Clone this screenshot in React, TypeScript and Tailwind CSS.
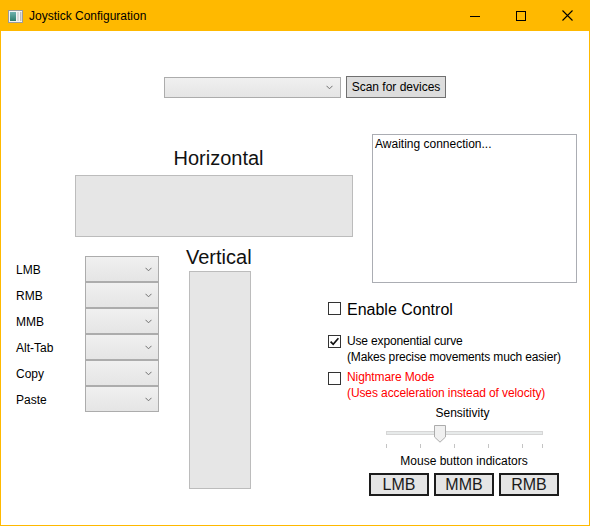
import React from "react";

function Chevron() {
  return (
    <svg width="7" height="5" viewBox="0 0 7 5" className="block">
      <path d="M0.5 0.8 L3.5 3.8 L6.5 0.8" fill="none" stroke="#707070" strokeWidth="1" />
    </svg>
  );
}

function Combo({ className }: { className: string }) {
  return (
    <div
      className={
        "border border-[#ACACAC] bg-gradient-to-b from-[#F0F0F0] to-[#E5E5E5] flex items-center justify-end " +
        className
      }
    >
      <Chevron />
    </div>
  );
}

function CheckBox({ checked, className }: { checked?: boolean; className?: string }) {
  return (
    <div className={"w-[13px] h-[13px] shrink-0 border border-[#333333] bg-white relative " + (className ?? "")}>
      {checked && (
        <svg width="11" height="11" viewBox="0 0 11 11" className="absolute left-0 top-0">
          <path d="M1.6 5.6 L4.2 8.3 L9.4 2.2" fill="none" stroke="#111" strokeWidth="1.7" />
        </svg>
      )}
    </div>
  );
}

function AppIcon() {
  return (
    <svg width="15" height="13" viewBox="0 0 15 13" className="block">
      <defs>
        <linearGradient id="tl" x1="0" y1="0" x2="0" y2="1">
          <stop offset="0" stopColor="#6FB2B0" />
          <stop offset="1" stopColor="#2E7D6C" />
        </linearGradient>
      </defs>
      <rect x="0.5" y="0.5" width="14" height="12" fill="#F4F4F4" stroke="#9B9B9B" />
      <rect x="2" y="2" width="6" height="9" fill="url(#tl)" />
      <rect x="9" y="2" width="2" height="9" fill="#D9D9D9" />
      <rect x="12" y="2" width="1.5" height="9" fill="#BDBDBD" />
    </svg>
  );
}

function IndicatorButton({ label }: { label: string }) {
  return (
    <div className="w-[60px] h-[23px] border-2 border-[#1c1c1c] bg-[#E5E5E5] flex items-center justify-center text-[16px] leading-[20px] text-[#1a1a1a]">
      {label}
    </div>
  );
}

export default function App() {
  const labels = ["LMB", "RMB", "MMB", "Alt-Tab", "Copy", "Paste"];
  const ticks = [0, 34, 68, 102, 136, 156];
  return (
    <div className="w-[590px] h-[526px] bg-[#FFB900] flex flex-col font-['Liberation_Sans',Arial,sans-serif] text-black">
      {/* Title bar */}
      <div className="h-[31px] flex items-center shrink-0">
        <div className="ml-[8px] mt-[1px]">
          <AppIcon />
        </div>
        <div className="ml-[6px] text-[12px] leading-[16px] text-black">Joystick Configuration</div>
        <div className="ml-auto flex h-full">
          <div className="w-[46px] h-full flex items-center justify-center">
            <svg width="10" height="10" viewBox="0 0 10 10">
              <path d="M0 5.5 H10" stroke="#000" strokeWidth="1" />
            </svg>
          </div>
          <div className="w-[46px] h-full flex items-center justify-center">
            <svg width="10" height="10" viewBox="0 0 10 10">
              <rect x="0.5" y="0.5" width="9" height="9" fill="none" stroke="#000" strokeWidth="1" />
            </svg>
          </div>
          <div className="w-[46px] h-full flex items-center justify-center">
            <svg width="11" height="11" viewBox="0 0 11 11">
              <path d="M0.5 0.5 L10.5 10.5 M10.5 0.5 L0.5 10.5" stroke="#000" strokeWidth="1.1" />
            </svg>
          </div>
        </div>
      </div>

      {/* Client area */}
      <div className="flex-1 mx-px mb-px bg-white flex flex-col">
        {/* Device row */}
        <div className="flex items-start ml-[163px] mt-[45px] gap-[5px] h-[22px]">
          <Combo className="w-[177px] h-[21px] mt-[1px] pr-[7px]" />
          <div className="w-[100px] h-[22px] border border-[#707070] bg-[#DDDDDD] flex items-center justify-center text-[12px] leading-[16px]">
            Scan for devices
          </div>
        </div>

        <div className="flex">
          {/* Left side */}
          <div className="w-[327px] flex flex-col">
            <div className="ml-[74px] w-[278px] pl-[9px] mt-[47px] text-center text-[20px] leading-[26px] text-[#111]">
              Horizontal
            </div>
            <div className="ml-[74px] w-[278px] h-[62px] mt-[4px] border border-[#BCBCBC] bg-[#E6E6E6]" />

            <div className="flex mt-[7px]">
              <div className="ml-[15px] w-[69px] mt-[12px] flex flex-col">
                {labels.map((l) => (
                  <div key={l} className="h-[26px] pt-[2px] flex items-center text-[12px] leading-[16px]">
                    {l}
                  </div>
                ))}
              </div>
              <div className="w-[74px] mt-[12px] flex flex-col">
                {labels.map((l) => (
                  <Combo key={l} className="h-[26px] pr-[6px]" />
                ))}
              </div>
              <div className="ml-[30px] w-[62px] flex flex-col">
                <div className="-ml-[3px] w-[66px] text-left text-[20px] leading-[26px] text-[#111] whitespace-nowrap">
                  Vertical
                </div>
                <div className="mt-[1px] w-[62px] h-[218px] border border-[#BCBCBC] bg-[#E6E6E6]" />
              </div>
            </div>
          </div>

          {/* Right side */}
          <div className="flex-1 flex flex-col">
            <div className="ml-[44px] w-[205px] h-[149px] mt-[36px] border border-[#ABADB3] px-[2px] pt-[1px] text-[12px] leading-[16px]">
              Awaiting connection...
            </div>

            <div className="flex items-start mt-[17px]">
              <CheckBox className="mt-[2px]" />
              <div className="ml-[6px] text-[16px] leading-[20px]">Enable Control</div>
            </div>

            <div className="flex items-start mt-[13px]">
              <CheckBox checked className="mt-[2px]" />
              <div className="ml-[6px] text-[12px] leading-[16px] tracking-[-0.15px]">
                Use exponential curve
                <br />
                (Makes precise movements much easier)
              </div>
            </div>

            <div className="flex items-start mt-[4px]">
              <CheckBox className="mt-[3px]" />
              <div className="ml-[6px] text-[12px] leading-[16px] tracking-[-0.1px] text-[#FF0000]">
                Nightmare Mode
                <br />
                (Uses acceleration instead of velocity)
              </div>
            </div>

            <div className="ml-[58px] w-[157px] pr-[4px] mt-[4px] text-center text-[12px] leading-[16px]">
              Sensitivity
            </div>

            <div className="ml-[58px] w-[157px] h-[28px] relative">
              <div className="absolute left-0 right-0 top-[10px] h-[4px] border border-[#D6D6D6] bg-[#E7EAEA]" />
              <svg width="12" height="18" viewBox="0 0 12 18" className="absolute left-[48px] top-[4px]">
                <path d="M0.5 0.5 H11.5 V12 L6 17.2 L0.5 12 Z" fill="#F0F0F0" stroke="#ACACAC" strokeWidth="1" />
              </svg>
              {ticks.map((t) => (
                <div key={t} className="absolute top-[23px] w-px h-[4px] bg-[#C4C4C4]" style={{ left: t }} />
              ))}
            </div>

            <div className="ml-[41px] w-[190px] mt-[4px] text-center text-[12px] leading-[16px]">
              Mouse button indicators
            </div>

            <div className="flex ml-[41px] mt-[4px] gap-[5px]">
              <IndicatorButton label="LMB" />
              <IndicatorButton label="MMB" />
              <IndicatorButton label="RMB" />
            </div>
          </div>
        </div>
      </div>
    </div>
  );
}
